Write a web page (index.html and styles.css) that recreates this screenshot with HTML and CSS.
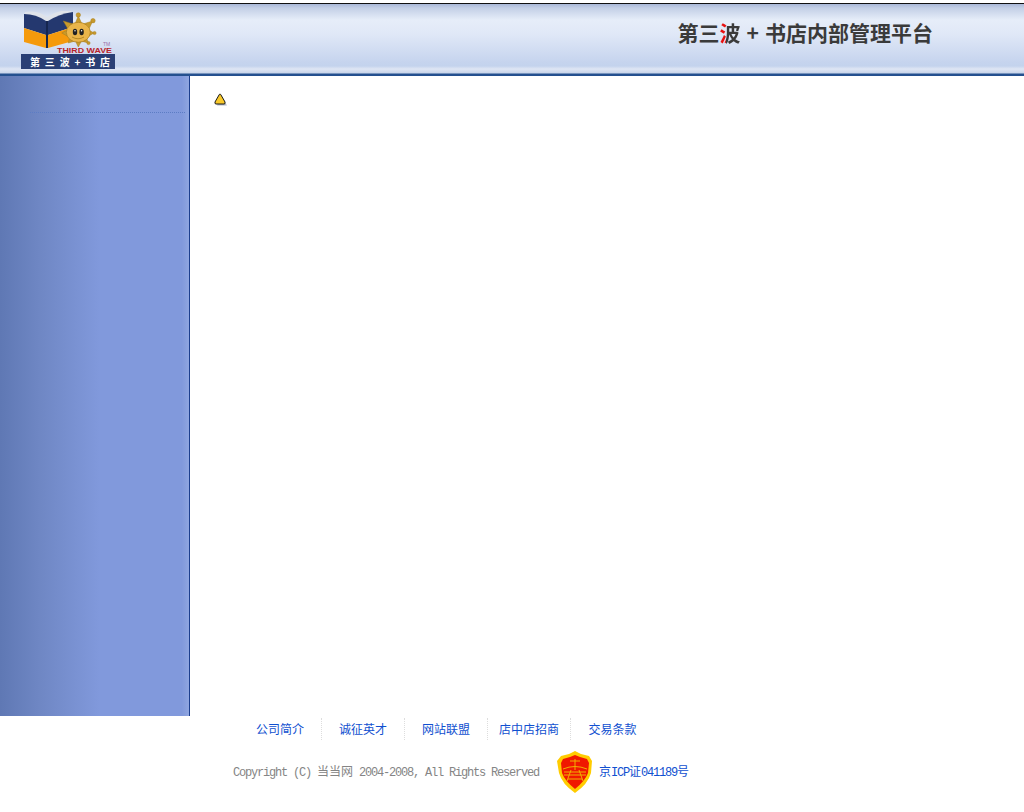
FILE: index.html
```html
<!DOCTYPE html>
<html lang="zh-CN">
<head>
    <meta charset="UTF-8">
    <title>第三波 + 书店内部管理平台</title>
    <link rel="stylesheet" href="styles.css">
</head>
<body>
    <div class="header">
        <svg class="logo" width="96" height="60" viewBox="0 0 96 60">
            <!-- book -->
            <path d="M4 1 Q16 -1 26 6 Q38 -2 50 0 L53 6 L26 14 L3 6 Z" fill="#dfe3ea"/>
            <path d="M3 3 Q15 3 25 10 L25 24 L3 17 Z" fill="#24386f"/>
            <path d="M27 10 Q38 3 52 1 L52 16 L27 24 Z" fill="#24386f"/>
            <path d="M3 17 L25 24 L25 37 L3 31 Z" fill="#f59a0c"/>
            <path d="M27 24 L52 16 L52 30 L27 37 Z" fill="#f59a0c"/>
            <path d="M25 10 L27 10 L27 37 L25 37 Z" fill="#16264f"/>
            <!-- sun -->
            <g fill="#c79a2c" stroke="#a97c1c" stroke-width="0.5">
                <path d="M57.300 5 L61 13 L54 13 Z"/>
                <path d="M71.700 10 L68 18 L62 13 Z"/>
                <path d="M73 22 L66 26 L66 18 Z"/>
                <path d="M67.300 32 L60 30 L65 25 Z"/>
                <path d="M57.300 36 L54 29 L61 29 Z"/>
                <path d="M47.300 32 L49 25 L54 30 Z"/>
                <path d="M40.700 22 L48 18 L48 26 Z"/>
                <path d="M42.300 10 L52 13 L47 18 Z"/>
                <circle cx="57.300" cy="4" r="2.200"/>
                <circle cx="72" cy="9.700" r="2.200"/>
                <circle cx="73.500" cy="22" r="1.600"/>
                <circle cx="67.500" cy="32" r="1.600"/>
            </g>
            <ellipse cx="57.300" cy="21.300" rx="12" ry="10" fill="#eab54a" stroke="#a97c1c" stroke-width="0.7"/>
            <ellipse cx="54" cy="21" rx="2.200" ry="3.200" fill="#222"/>
            <ellipse cx="60.600" cy="21" rx="2.200" ry="3.200" fill="#222"/>
            <circle cx="54" cy="19.800" r="0.700" fill="#fff"/>
            <circle cx="60.600" cy="19.800" r="0.700" fill="#fff"/>
            <path d="M51 26 Q57 29.500 63 26" fill="none" stroke="#a97c1c" stroke-width="0.8"/>
            <!-- words -->
            <text x="82" y="35" class="logo-tm">TM</text>
            <text x="36" y="42" class="logo-en" textLength="55" lengthAdjust="spacingAndGlyphs">THIRD WAVE</text>
            <rect x="0" y="43" width="94" height="15" fill="#2a3f75"/>
            <text x="9" y="55" class="logo-cn" textLength="80">第 三 波 + 书 店</text>
        </svg>
        <div class="title">第三<span class="title-red">波</span><span class="title-plus">+</span>书店内部管理平台</div>
    </div>

    <div class="main">
        <div class="sidebar">
            <div class="side-line"></div>
        </div>
        <div class="content">
            <svg width="14" height="14" viewBox="0 0 14 14">
                <path d="M7 2.500 L13 12.500 L3 12.500 Z" fill="#b4bac8"/>
                <path d="M6 1 Q6.500 1 7 2 L11 9 Q11.500 11 10 11 L2 11 Q0.500 11 1 9 L5 2 Q5.500 1 6 1 Z" fill="#f9c92a" stroke="#1a1a1a" stroke-width="1"/>
            </svg>
        </div>
    </div>

    <div class="footer">
        <div class="foot-nav">
            <a class="foot-link">公司简介</a>
            <a class="foot-link">诚征英才</a>
            <a class="foot-link">网站联盟</a>
            <a class="foot-link">店中店招商</a>
            <a class="foot-link">交易条款</a>
        </div>
        <div class="foot-legal">
            <span class="copyright">Copyright (C) <span class="cjk">当当网</span> 2004-2008, All Rights Reserved</span>
            <svg class="badge" width="36" height="42" viewBox="0 0 36 42">
                <path d="M18 0 L24 3 L32 5 L35 10 L34 22 Q31 33 18 42 Q5 33 2 22 L0 10 L4 5 L12 3 Z" fill="#ffcc00"/>
                <path d="M18 4 L23 6 L30 8 L32 12 L31 22 Q28 30 18 38 Q8 30 5 22 L4 12 L6 8 L13 6 Z" fill="#f01800"/>
                <g stroke="#f0b000" stroke-width="1" fill="none">
                    <path d="M13 10 H23 M18 8 V19"/>
                    <path d="M6 18 Q18 13 30 18"/>
                    <path d="M7 21 H29 M7 24 H29"/>
                    <path d="M14 19 L10 30 M22 19 L26 30 M11 28 H25"/>
                </g>
            </svg>
            <a class="icp"><span class="cjk">京</span>ICP<span class="cjk">证</span>041189<span class="cjk">号</span></a>
        </div>
    </div>
</body>
</html>
```

FILE: styles.css
```css
body {
    margin: 0;
    background-color: #fff;
    font-family: "Noto Sans CJK SC", sans-serif;
}

.header {
    display: flex;
    justify-content: space-between;
    align-items: flex-start;
    box-sizing: border-box;
    height: 73px;
    margin-top: 3px;
    padding: 7px 91px 0 21px;
    border-top: 1px solid #111;
    background: linear-gradient(#a9b8d8 0, #c3cfe6 4px, #e6edf9 16px, #e0e8f7 30px, #c6d4ee 58px, #c4d3ed 62px, #dfe6f4 65px, #c9d5ea 69px, #24508f 70px, #24508f 73px);
}

.logo {
    display: block;
}

.logo-tm {
    font: 5px "Liberation Sans", sans-serif;
    fill: #9a70a8;
}

.logo-en {
    font: bold 7.500px "Liberation Sans", sans-serif;
    fill: #b8232a;
}

.logo-cn {
    font: bold 10px "Noto Sans CJK SC", sans-serif;
    fill: #fff;
}

.title {
    display: flex;
    margin-top: 6px;
    font-size: 21px;
    line-height: 30px;
    font-weight: 700;
    color: #3a3a3a;
}

.title-red {
    background: linear-gradient(90deg, #e81010 30%, #3a3a3a 30%);
    -webkit-background-clip: text;
    background-clip: text;
    color: transparent;
}

.title-plus {
    margin: 0 6px;
}

.main {
    display: flex;
    height: 640px;
}

.sidebar {
    box-sizing: border-box;
    width: 190px;
    padding-top: 36px;
    border-right: 1px solid #1d3f8e;
    background: linear-gradient(90deg, #5f78b4 0, #6f87c4 40px, #8199dc 100px, #8199dc 182px, #90a6e0 189px);
}

.side-line {
    margin-left: 30px;
    margin-right: 4px;
    border-top: 1px dotted #5c7cc4;
}

.content {
    flex: 1;
    padding: 17px 0 0 24px;
}

.content svg {
    display: block;
}

.footer {
    padding-left: 233px;
}

.foot-nav {
    display: flex;
    align-items: center;
    height: 22px;
    margin-top: 2px;
    margin-left: 6px;
}

.foot-link {
    box-sizing: border-box;
    width: 83px;
    font-size: 12px;
    line-height: 22px;
    text-align: center;
    color: #1050d0;
    border-right: 1px dotted #ddd;
}

.foot-link:last-child {
    border-right: none;
}

.foot-legal {
    display: flex;
    align-items: center;
    margin-top: 11px;
}

.copyright {
    width: 324px;
    padding-bottom: 2px;
    font-family: "Liberation Mono", monospace;
    font-size: 12px;
    letter-spacing: -1.200px;
    color: #858585;
    white-space: pre;
}

.cjk {
    font-family: "Noto Sans CJK SC", sans-serif;
    font-size: 12px;
    letter-spacing: 0;
}

.badge {
    display: block;
    margin-right: 6px;
}

.icp {
    padding-bottom: 2px;
    font-family: "Liberation Mono", monospace;
    font-size: 12px;
    letter-spacing: -1.200px;
    color: #1050d0;
}
```
